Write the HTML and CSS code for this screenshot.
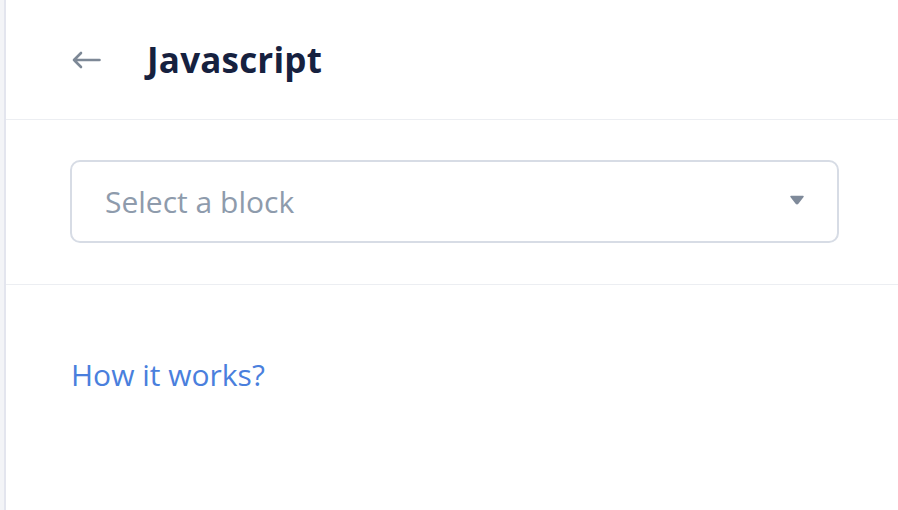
FILE: index.html
```html
<!DOCTYPE html>
<html lang="en">
<head>
    <meta charset="UTF-8">
    <meta name="viewport" content="width=device-width, initial-scale=1.0">
    <title>Javascript</title>
    <link rel="stylesheet" href="styles.css">
</head>
<body>
    <div class="panel">
        <div class="header">
            <a class="back" href="#" aria-label="Back">
                <svg width="30" height="20" viewBox="0 0 30 20">
                    <path d="M28.5 10H3M10 3L3 10L10 17" fill="none" stroke="#7d8896" stroke-width="2.6" stroke-linecap="round" stroke-linejoin="round"/>
                </svg>
            </a>
            <h1>Javascript</h1>
        </div>

        <div class="block-row">
            <div class="select">
                <span class="placeholder">Select a block</span>
                <svg class="caret" width="16" height="10" viewBox="0 0 16 10">
                    <path d="M2 1.5H14L8.8 8.2Q8 9.1 7.2 8.2Z" fill="#7f8a9a" stroke="#7f8a9a" stroke-width="1.5" stroke-linejoin="round"/>
                </svg>
            </div>
        </div>

        <div class="help">
            <a href="#">How it works?</a>
        </div>
    </div>
</body>
</html>
```

FILE: styles.css
```css
body {
    margin: 0;
    font-family: "Open Sans", "Noto Sans", sans-serif;
    background: #ffffff;
    height: 100vh;
    overflow: hidden;
}

.panel {
    height: 100%;
    margin-left: 4px;
    border-left: 2px solid #e3e5ee;
    box-shadow: -4px 0 0 #f3f4f7;
}

.header {
    height: 120px;
    display: flex;
    align-items: center;
    padding-left: 65px;
    border-bottom: 1px solid #eceef2;
    box-sizing: border-box;
}

.back {
    display: flex;
    width: 30px;
    margin-right: 46px;
}

h1 {
    margin: 0;
    font-size: 35px;
    font-weight: 700;
    color: #16213f;
    letter-spacing: 0.2px;
}

.block-row {
    padding: 40px 59px 41px 64px;
    border-bottom: 1px solid #eceef2;
}

.select {
    height: 83px;
    box-sizing: border-box;
    border: 2px solid #d7dce5;
    border-radius: 10px;
    display: flex;
    align-items: center;
    justify-content: space-between;
    padding: 0 32px 0 33px;
}

.placeholder {
    font-size: 30px;
    color: #8e9bac;
}

.caret {
    margin-top: -3px;
}

.help {
    padding: 69px 0 0 65px;
}

.help a {
    font-size: 30px;
    color: #4a7fdd;
    text-decoration: none;
}
```
